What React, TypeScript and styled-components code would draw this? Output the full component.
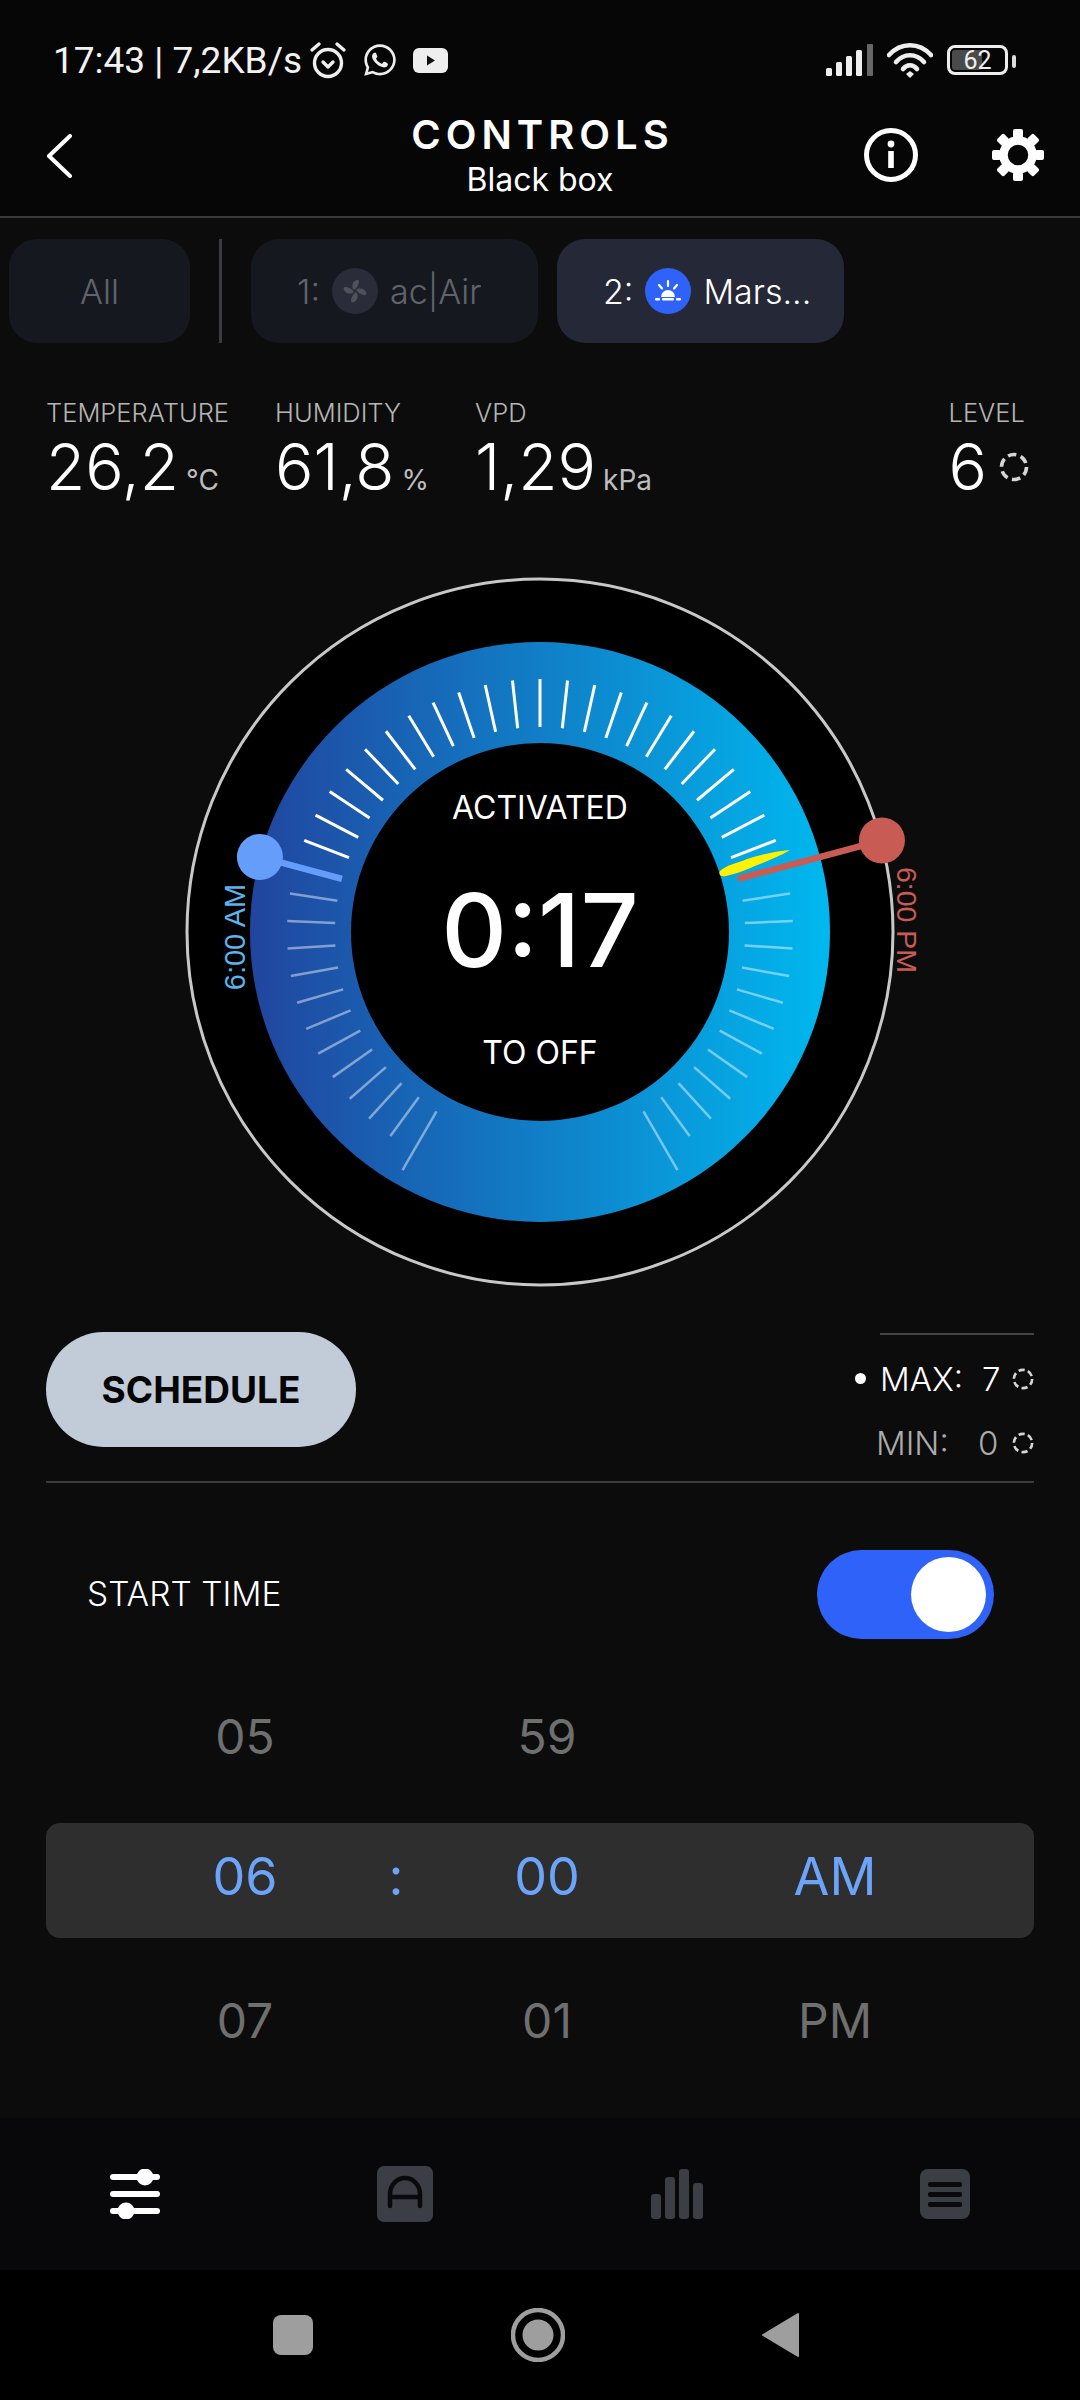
import React from 'react'
import styled, { createGlobalStyle } from 'styled-components'
import { FaWhatsapp } from 'react-icons/fa'

const GlobalStyle = createGlobalStyle`
  html, body {
    margin: 0;
    padding: 0;
    background: #0c0c0c;
  }
  * {
    box-sizing: border-box;
  }
`

const Page = styled.div`
  width: 1080px;
  height: 2400px;
  display: flex;
  flex-direction: column;
  overflow: hidden;
  background: #0c0c0c;
  color: #fff;
  font-family: Inter, "Noto Sans", sans-serif;
`

const TopArea = styled.div`
  background: #060606;
`

const StatusBar = styled.div`
  height: 90px;
  padding: 30px 65px 0 53px;
  display: flex;
  align-items: center;
`

const StatusText = styled.span`
  font-family: Roboto, sans-serif;
  font-size: 37px;
  color: #f2f2f2;
  white-space: nowrap;
`

const StatusLeft = styled.div`
  display: flex;
  align-items: center;
  gap: 15px;
  margin-left: 7px;
`

const StatusRight = styled.div`
  margin-left: auto;
  display: flex;
  align-items: center;
  gap: 14px;
`

const Battery = styled.div`
  position: relative;
  width: 61px;
  height: 30px;
  border: 3px solid #eee;
  border-radius: 8px;
  display: flex;
  align-items: center;
  justify-content: center;
  font-family: Roboto, sans-serif;
  font-size: 25px;
  color: #eee;
  margin-right: 7px;

  &::before {
    content: '';
    position: absolute;
    left: 2px;
    top: 2px;
    bottom: 2px;
    width: 30px;
    border-radius: 3px;
    background: #4a4a4a;
  }

  &::after {
    content: '';
    position: absolute;
    right: -11px;
    top: 7px;
    width: 4px;
    height: 13px;
    border-radius: 2px;
    background: #ddd;
  }
`

const BatteryValue = styled.span`
  position: relative;
`

const Header = styled.header`
  height: 128px;
  padding: 3px 36px 0;
  display: grid;
  grid-template-columns: 1fr auto 1fr;
  align-items: center;
  border-bottom: 2px solid #3a3a3a;
`

const BackButton = styled.div`
  display: flex;
  margin: 3px 0 0 10px;
`

const TitleBlock = styled.div`
  padding-top: 2px;
  text-align: center;
`

const Title = styled.div`
  font-size: 40px;
  line-height: 48px;
  font-weight: 600;
  letter-spacing: 5px;
  margin-right: -5px;
`

const Subtitle = styled.div`
  font-size: 32px;
  line-height: 40px;
  margin-top: 1px;
`

const HeaderActions = styled.div`
  display: flex;
  justify-content: flex-end;
  align-items: center;
  gap: 74px;
`

const TabsRow = styled.div`
  display: flex;
  align-items: stretch;
  height: 104px;
  margin-top: 21px;
  padding-left: 9px;
`

const Tab = styled.div<{ $active?: boolean; $wide?: boolean }>`
  width: ${p => (p.$wide ? 287 : 181)}px;
  margin-right: ${p => (p.$wide ? 19 : 0)}px;
  padding-left: ${p => (p.$wide ? 46 : 0)}px;
  border-radius: 28px;
  background: ${p => (p.$active ? '#252937' : '#16181f')};
  color: ${p => (p.$active ? '#fff' : '#62646d')};
  display: flex;
  align-items: center;
  justify-content: ${p => (p.$wide ? 'flex-start' : 'center')};
  gap: 12px;
  font-size: 34px;
  font-weight: 300;
  white-space: nowrap;
`

const TabDivider = styled.div`
  width: 3px;
  margin: 0 29px;
  background: #3b3c40;
`

const TabIcon = styled.div<{ $color: string }>`
  width: 46px;
  height: 46px;
  border-radius: 50%;
  background: ${p => p.$color};
  display: flex;
  align-items: center;
  justify-content: center;
`

const Stats = styled.section`
  display: flex;
  gap: 46px;
  margin-top: 55px;
  padding: 0 46px;
`

const Stat = styled.div<{ $right?: boolean }>`
  ${p => (p.$right ? 'margin-left: auto; margin-right: 5px;' : '')}
`

const StatLabel = styled.div`
  font-size: 25.5px;
  line-height: 30px;
  font-weight: 300;
  color: #b5b5b5;
  white-space: nowrap;
`

const StatValue = styled.div`
  display: flex;
  align-items: baseline;
  height: 64px;
  margin-top: 7px;
  font-size: 64px;
  line-height: 64px;
  font-weight: 300;
  white-space: nowrap;
`

const StatUnit = styled.span`
  margin-left: 7px;
  font-size: 28px;
  font-weight: 400;
  color: #bdbdbd;
`

const LevelIcon = styled.span`
  margin-left: 12px;
  align-self: center;
  display: flex;
`

const DialWrap = styled.div`
  position: relative;
  align-self: center;
  width: 800px;
  height: 760px;
  margin-top: 53px;
`

const DialCenter = styled.div`
  position: absolute;
  top: 190px;
  left: 210px;
  width: 380px;
  height: 380px;
  display: flex;
  flex-direction: column;
  align-items: center;
  font-size: 32px;
  line-height: 40px;
`

const DialTop = styled.div`
  margin-top: 46px;
`

const DialTime = styled.div`
  margin-top: 42px;
  font-size: 102px;
  line-height: 120px;
  font-weight: 500;
`

const DialBottom = styled.div`
  margin-top: 43px;
`

const ScheduleRow = styled.section`
  margin: 20px 46px 0;
  height: 151px;
  display: flex;
  justify-content: space-between;
  border-bottom: 2px solid #3c3c40;
`

const ScheduleButton = styled.button`
  width: 310px;
  height: 115px;
  border: 0;
  border-radius: 58px;
  background: #c2ccd9;
  color: #050505;
  font-family: inherit;
  font-size: 37px;
  font-weight: 700;
`

const Limits = styled.div`
  width: 174px;
  display: flex;
  flex-direction: column;
  align-items: flex-end;
`

const LimitsRule = styled.div`
  width: 154px;
  height: 2px;
  margin-top: 1px;
  background: #444;
`

const LimitRow = styled.div<{ $active?: boolean }>`
  position: relative;
  width: 154px;
  height: 64px;
  margin-top: ${p => (p.$active ? 12 : 0)}px;
  display: flex;
  align-items: center;
  font-size: 33px;
  font-weight: 300;
  color: ${p => (p.$active ? '#fff' : '#ababab')};

  ${p => p.$active && `
    &::before {
      content: '';
      position: absolute;
      left: -25px;
      top: 26px;
      width: 11px;
      height: 11px;
      border-radius: 50%;
      background: #fff;
    }
  `}
`

const LimitName = styled.span<{ $offset?: number }>`
  width: 102px;
  margin-left: ${p => p.$offset ?? 0}px;
  padding-right: ${p => -(p.$offset ?? 0)}px;
  white-space: nowrap;
`

const LimitIcon = styled.span`
  margin-left: auto;
  display: flex;
`

const StartRow = styled.section`
  margin-top: 67px;
  padding: 0 86px 0 87px;
  display: flex;
  align-items: center;
  justify-content: space-between;
`

const StartLabel = styled.div`
  margin-bottom: 2px;
  font-size: 33.5px;
  font-weight: 300;
`

const Toggle = styled.div`
  position: relative;
  width: 177px;
  height: 89px;
  border-radius: 45px;
  background: #2e62f8;

  &::after {
    content: '';
    position: absolute;
    top: 7px;
    right: 8px;
    width: 75px;
    height: 75px;
    border-radius: 50%;
    background: #fff;
  }
`

const PickerRow = styled.div<{ $selected?: boolean; $top: number }>`
  margin: ${p => p.$top}px 46px 0;
  height: ${p => (p.$selected ? 115 : 96)}px;
  padding: 0 11px ${p => (p.$selected ? 9 : 0)}px 99px;
  display: grid;
  grid-template-columns: 200px 102px 200px 1fr;
  align-items: center;
  justify-items: center;
  border-radius: 14px;
  background: ${p => (p.$selected ? '#2e2e2e' : 'transparent')};
  color: ${p => (p.$selected ? '#6ba4f8' : '#6f6f6f')};
  font-size: ${p => (p.$selected ? 52 : 48)}px;
`

const BottomNav = styled.nav`
  margin-top: 50px;
  height: 152px;
  padding: 0 110px;
  display: flex;
  align-items: center;
  justify-content: space-between;
  background: #08080a;
`

const SystemNav = styled.div`
  flex: 1;
  padding: 0 281px 0 273px;
  display: flex;
  align-items: center;
  justify-content: space-between;
  background: #000;
`

const DashedRing = ({ size }: { size: number }) => (
    <svg width={size} height={size} viewBox="0 0 30 30">
        <circle cx="15" cy="15" r="12.5" fill="none" stroke="#d6d6d6" strokeWidth="3.6" strokeDasharray="8.5 4.6" />
    </svg>
)

const AlarmIcon = () => (
    <svg width="38" height="38" viewBox="0 0 38 38" fill="none" stroke="#eee" strokeWidth="3.4">
        <circle cx="19" cy="22" r="13.5" />
        <path d="M14 21l5 5 5-5" strokeLinecap="round" strokeLinejoin="round" />
        <path d="M3 9l7-6M35 9l-7-6" strokeLinecap="round" />
    </svg>
)

const YoutubeIcon = () => (
    <svg width="35" height="25" viewBox="0 0 35 25">
        <rect width="35" height="25" rx="6" fill="#eee" />
        <path d="M14 7.5l8 5-8 5z" fill="#111" />
    </svg>
)

const SignalIcon = () => (
    <svg width="47" height="32" viewBox="0 0 47 32" fill="#eee">
        <rect x="0" y="24" width="6" height="8" rx="1.5" />
        <rect x="10" y="18" width="6" height="14" rx="1.5" />
        <rect x="20" y="12" width="6" height="20" rx="1.5" />
        <rect x="30" y="6" width="6" height="26" rx="1.5" />
        <rect x="41" y="0" width="6" height="32" rx="1" fill="#666" />
    </svg>
)

const WifiIcon = () => (
    <svg width="46" height="36" viewBox="0 0 46 36" fill="none" stroke="#eee" strokeWidth="4.6" strokeLinecap="round">
        <path d="M2 13C14 0 32 0 44 13" />
        <path d="M9 20C17 11 29 11 37 20" />
        <path d="M16 27C20 22 26 22 30 27" />
        <path d="M23 29l-4 3 4 4 4-4z" fill="#eee" stroke="none" />
    </svg>
)

const BackIcon = () => (
    <svg width="26" height="44" viewBox="0 0 26 44" fill="none" stroke="#fff" strokeWidth="4" strokeLinecap="round" strokeLinejoin="round">
        <path d="M24 2L3 22l21 20" />
    </svg>
)

const InfoIcon = () => (
    <svg width="54" height="54" viewBox="0 0 54 54">
        <circle cx="27" cy="27" r="24.5" fill="none" stroke="#fff" strokeWidth="5" />
        <circle cx="27" cy="16" r="3.4" fill="#fff" />
        <rect x="24.2" y="23" width="5.6" height="17" fill="#fff" />
    </svg>
)

const GearIcon = () => (
    <svg width="52" height="52" viewBox="-26 -26 52 52">
        <circle r="14.5" fill="none" stroke="#fff" strokeWidth="8.5" />
        {Array.from({ length: 8 }, (_, i) => (
            <rect key={i} x="-5" y="-26" width="10" height="9" rx="2" fill="#fff" transform={`rotate(${i * 45})`} />
        ))}
    </svg>
)

const FanIcon = () => (
    <svg width="26" height="26" viewBox="-16 -16 32 32" fill="#4f515b">
        {[0, 90, 180, 270].map(a => (
            <path key={a} d="M-1.5-1.5C-5-6-3-13 3-14 6-14 5-9 3-6 2-4 1-3-1.5-1.5z" transform={`rotate(${a})`} />
        ))}
    </svg>
)

const SunriseIcon = () => (
    <svg width="32" height="32" viewBox="0 0 32 32" fill="#fff">
        <path d="M9 22a7 7 0 0 1 14 0z" />
        <rect x="3" y="23" width="5" height="2.4" rx="1" />
        <rect x="10" y="23" width="12" height="2.4" rx="1" />
        <rect x="24" y="23" width="5" height="2.4" rx="1" />
        <path d="M16 6v5M7 10l3 3.5M25 10l-3 3.5" stroke="#fff" strokeWidth="2.2" strokeLinecap="round" />
    </svg>
)

const SlidersIcon = () => (
    <svg width="50" height="50" viewBox="0 0 50 50" fill="#fff">
        <rect x="0" y="5" width="50" height="6" rx="3" />
        <circle cx="35" cy="8" r="8.5" />
        <rect x="0" y="22" width="50" height="6" rx="3" />
        <rect x="0" y="39" width="50" height="6" rx="3" />
        <circle cx="16" cy="42" r="8.5" />
    </svg>
)

const AutoIcon = () => (
    <svg width="56" height="56" viewBox="0 0 56 56">
        <rect width="56" height="56" rx="7" fill="#3c3e46" />
        <path d="M13 40V28a15 16 0 0 1 30 0v12M13 31h30" fill="none" stroke="#0a0a0c" strokeWidth="4.5" strokeLinecap="round" />
    </svg>
)

const BarsIcon = () => (
    <svg width="52" height="50" viewBox="0 0 52 50" fill="#3c3e46">
        <rect x="0" y="25" width="10" height="25" rx="3" />
        <rect x="14" y="8" width="10" height="42" rx="3" />
        <rect x="28" y="0" width="10" height="50" rx="3" />
        <rect x="42" y="14" width="10" height="36" rx="3" />
    </svg>
)

const ListIcon = () => (
    <svg width="50" height="50" viewBox="0 0 50 50">
        <rect width="50" height="50" rx="8" fill="#3c3e46" />
        <g fill="#0a0a0c">
            <rect x="8" y="13" width="34" height="5" rx="2" />
            <rect x="8" y="23" width="34" height="5" rx="2" />
            <rect x="8" y="33" width="34" height="5" rx="2" />
        </g>
    </svg>
)

const SquareKey = () => (
    <svg width="40" height="40" viewBox="0 0 40 40">
        <rect width="40" height="40" rx="8" fill="#9e9e9e" />
    </svg>
)

const HomeKey = () => (
    <svg width="54" height="54" viewBox="0 0 54 54">
        <circle cx="27" cy="27" r="25" fill="none" stroke="#9e9e9e" strokeWidth="4.5" />
        <circle cx="27" cy="27" r="15.5" fill="#9e9e9e" />
    </svg>
)

const BackKey = () => (
    <svg width="37" height="46" viewBox="0 0 37 46">
        <path d="M36 2v42L1 23z" fill="#9e9e9e" stroke="#9e9e9e" strokeWidth="2" strokeLinejoin="round" />
    </svg>
)

const C = 380
const polar = (r: number, deg: number) => {
    const a = (deg * Math.PI) / 180
    return { x: C + r * Math.sin(a), y: C - r * Math.cos(a) }
}

const ticks = Array.from({ length: 49 }, (_, i) => (i - 24) * 6.25).filter(a => Math.abs(a) !== 75)

function Dial() {
    const blueKnob = polar(290, -75)
    const blueEnd = polar(205, -75)
    const redKnob = polar(354, 75)
    const redEnd = polar(205, 75)

    return (
        <svg width="800" height="760" viewBox="-20 0 800 760">
            <defs>
                <linearGradient id="ring" x1="0" x2="1" y1="0" y2="0">
                    <stop offset="0" stopColor="#21459f" />
                    <stop offset="1" stopColor="#00b8ef" />
                </linearGradient>
            </defs>
            <circle cx={C} cy={C} r="353" fill="#000" stroke="#c8c8c8" strokeWidth="3" />
            <circle cx={C} cy={C} r="290" fill="url(#ring)" />
            <circle cx={C} cy={C} r="189" fill="#000" />
            {ticks.map(a => {
                const long = Math.abs(a) === 150
                const active = Math.abs(a) < 75
                const p1 = polar(long ? 207 : 205, a)
                const p2 = polar(long ? 275 : 253, a)
                return (
                    <line
                        key={a}
                        x1={p1.x}
                        y1={p1.y}
                        x2={p2.x}
                        y2={p2.y}
                        stroke="#fff"
                        strokeWidth={active ? 3 : 2.5}
                        strokeOpacity={active ? 1 : 0.45}
                    />
                )
            })}
            <path
                d="M560 319C566 313 578 311 587 307C600 303 616 299 630 298C620 304 610 308 600 312C588 317 576 322 566 324C561 325 558 323 560 319Z"
                fill="#fff200"
            />
            <line x1={blueEnd.x} y1={blueEnd.y} x2={blueKnob.x} y2={blueKnob.y} stroke="#659dfb" strokeWidth="6.5" />
            <circle cx={blueKnob.x} cy={blueKnob.y} r="23" fill="#659dfb" />
            <line x1={redEnd.x} y1={redEnd.y} x2={redKnob.x} y2={redKnob.y} stroke="#c95b55" strokeWidth="6.5" />
            <circle cx={redKnob.x} cy={redKnob.y} r="23" fill="#c95b55" />
            <text
                transform="translate(85 385) rotate(-90)"
                textAnchor="middle"
                fontFamily="Liberation Sans, sans-serif"
                fontSize="29"
                fill="#5ab4ee"
            >
                6:00 AM
            </text>
            <text
                transform="translate(737 368) rotate(90)"
                textAnchor="middle"
                fontFamily="Liberation Sans, sans-serif"
                fontSize="28.5"
                fill="#c95b55"
            >
                6:00 PM
            </text>
        </svg>
    )
}

export default function App() {
    return (
        <Page>
            <GlobalStyle />

            <TopArea>
                <StatusBar>
                    <StatusText>17:43 | 7,2KB/s</StatusText>
                    <StatusLeft>
                        <AlarmIcon />
                        <FaWhatsapp size={36} color="#eee" />
                        <YoutubeIcon />
                    </StatusLeft>
                    <StatusRight>
                        <SignalIcon />
                        <WifiIcon />
                        <Battery><BatteryValue>62</BatteryValue></Battery>
                    </StatusRight>
                </StatusBar>

                <Header>
                    <BackButton><BackIcon /></BackButton>
                    <TitleBlock>
                        <Title>CONTROLS</Title>
                        <Subtitle>Black box</Subtitle>
                    </TitleBlock>
                    <HeaderActions>
                        <InfoIcon />
                        <GearIcon />
                    </HeaderActions>
                </Header>
            </TopArea>

            <TabsRow>
                <Tab>All</Tab>
                <TabDivider />
                <Tab $wide>
                    1:
                    <TabIcon $color="#2a2d39"><FanIcon /></TabIcon>
                    ac|Air
                </Tab>
                <Tab $wide $active>
                    2:
                    <TabIcon $color="#2e62f8"><SunriseIcon /></TabIcon>
                    Mars...
                </Tab>
            </TabsRow>

            <Stats>
                <Stat>
                    <StatLabel>TEMPERATURE</StatLabel>
                    <StatValue>26,2<StatUnit>°C</StatUnit></StatValue>
                </Stat>
                <Stat>
                    <StatLabel>HUMIDITY</StatLabel>
                    <StatValue>61,8<StatUnit>%</StatUnit></StatValue>
                </Stat>
                <Stat>
                    <StatLabel>VPD</StatLabel>
                    <StatValue>1,29<StatUnit>kPa</StatUnit></StatValue>
                </Stat>
                <Stat $right>
                    <StatLabel>LEVEL</StatLabel>
                    <StatValue>6<LevelIcon><DashedRing size={30} /></LevelIcon></StatValue>
                </Stat>
            </Stats>

            <DialWrap>
                <Dial />
                <DialCenter>
                    <DialTop>ACTIVATED</DialTop>
                    <DialTime>0:17</DialTime>
                    <DialBottom>TO OFF</DialBottom>
                </DialCenter>
            </DialWrap>

            <ScheduleRow>
                <ScheduleButton>SCHEDULE</ScheduleButton>
                <Limits>
                    <LimitsRule />
                    <LimitRow $active>
                        <LimitName>MAX:</LimitName>
                        7
                        <LimitIcon><DashedRing size={22} /></LimitIcon>
                    </LimitRow>
                    <LimitRow>
                        <LimitName $offset={-4}>MIN:</LimitName>
                        0
                        <LimitIcon><DashedRing size={22} /></LimitIcon>
                    </LimitRow>
                </Limits>
            </ScheduleRow>

            <StartRow>
                <StartLabel>START TIME</StartLabel>
                <Toggle />
            </StartRow>

            <PickerRow $top={49}>
                <span>05</span>
                <span />
                <span>59</span>
                <span />
            </PickerRow>
            <PickerRow $selected $top={39}>
                <span>06</span>
                <span>:</span>
                <span>00</span>
                <span>AM</span>
            </PickerRow>
            <PickerRow $top={34}>
                <span>07</span>
                <span />
                <span>01</span>
                <span>PM</span>
            </PickerRow>

            <BottomNav>
                <SlidersIcon />
                <AutoIcon />
                <BarsIcon />
                <ListIcon />
            </BottomNav>

            <SystemNav>
                <SquareKey />
                <HomeKey />
                <BackKey />
            </SystemNav>
        </Page>
    )
}
